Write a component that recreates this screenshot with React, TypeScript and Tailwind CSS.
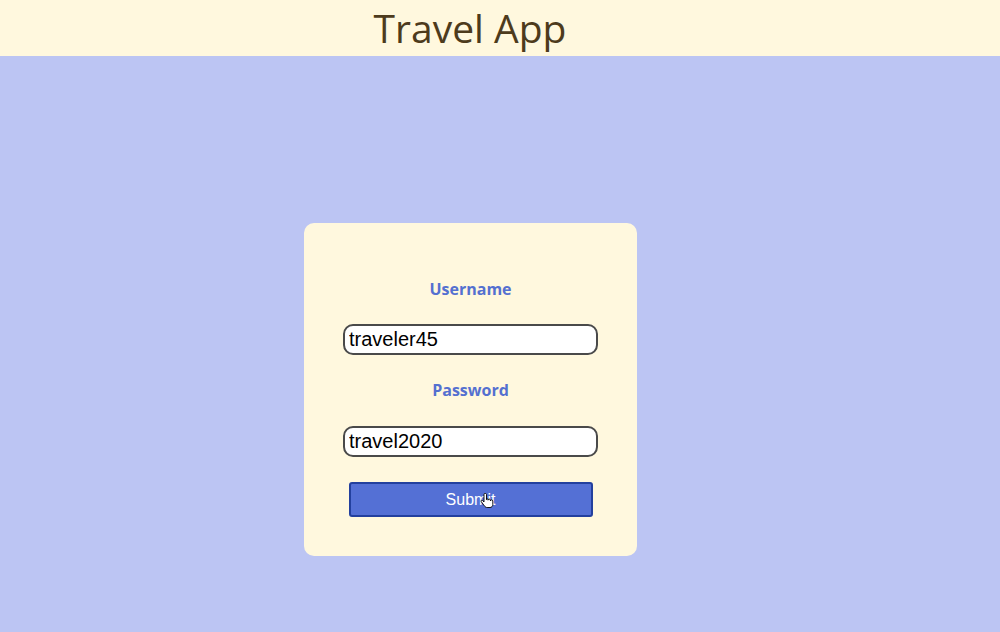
export default function App() {
  return (
    <div className="min-h-[632px] w-full bg-[#bcc5f3]" style={{ fontFamily: '"Open Sans", sans-serif' }}>
      <header className="h-14 w-full bg-[#fff8de]">
        <div className="flex h-14 w-[940px] items-center justify-center">
          <h1 className="-mt-[1px] text-[39px] leading-none text-[#4d3b1c]">Travel App</h1>
        </div>
      </header>

      <div className="flex w-[941px] justify-center pt-[167px]">
        <form className="flex h-[333px] w-[333px] flex-col items-center rounded-[10px] bg-[#fff8de] pt-[55px]">
          <label className="h-[22px] text-base font-bold leading-[22px] text-[#5470d0]">Username</label>
          <input
            type="text"
            defaultValue="traveler45"
            className="mt-[24px] h-[31px] w-[255px] rounded-[10px] border-2 border-[#4a4a4a] bg-white px-[4px] text-[20px] text-black outline-none"
            style={{ fontFamily: '"Liberation Sans", Arial, sans-serif' }}
          />
          <label className="mt-[24px] h-[22px] text-base font-bold leading-[22px] text-[#5470d0]">Password</label>
          <input
            type="text"
            defaultValue="travel2020"
            className="mt-[25px] h-[31px] w-[255px] rounded-[10px] border-2 border-[#4a4a4a] bg-white px-[4px] text-[20px] text-black outline-none"
            style={{ fontFamily: '"Liberation Sans", Arial, sans-serif' }}
          />
          <button
            type="button"
            className="relative mt-[25px] h-[35px] w-[244px] rounded-[3px] border-2 border-[#23409e] bg-[#5470d5] text-base text-white"
            style={{ fontFamily: '"Liberation Sans", Arial, sans-serif' }}
          >
            Submit
            <svg className="absolute left-[129px] top-[9px]" width="14" height="16" viewBox="0 0 14 16">
              <path
                d="M4 1.5v7.5l-1.5-1.5c-.8-.8-2 .2-1.3 1.1L4.5 13c.6.9 1.5 1.5 2.6 1.5H10c1.6 0 2.8-1.3 2.8-2.8V8c0-.7-.6-1.2-1.2-1.2s-1.2.5-1.2 1.2V7.2c0-.7-.6-1.2-1.2-1.2s-1.2.5-1.2 1.2v-.5c0-.7-.6-1.2-1.2-1.2S6.5 6 6.5 6.7V1.5C6.5.8 5.9.3 5.2.3S4 .8 4 1.5z"
                fill="#fff"
                stroke="#000"
                strokeWidth="0.9"
              />
            </svg>
          </button>
        </form>
      </div>
    </div>
  );
}
